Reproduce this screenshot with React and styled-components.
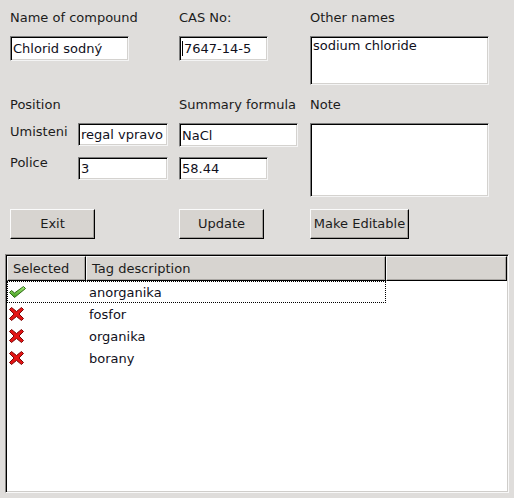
import React from 'react';
import styled, { createGlobalStyle } from 'styled-components';

const GlobalStyle = createGlobalStyle`
  body {
    margin: 0;
    background: #dfdddb;
    font-family: 'DejaVu Sans', 'Liberation Sans', sans-serif;
    font-size: 13px;
    color: #1c1c1c;
  }
`;

const TAGS = [
  { name: 'anorganika', selected: true },
  { name: 'fosfor', selected: false },
  { name: 'organika', selected: false },
  { name: 'borany', selected: false },
];

const CheckIcon = () => (
  <svg width='17' height='12' viewBox='0 0 17 12'>
    <defs>
      <linearGradient id='chk' x1='0' y1='0' x2='0' y2='1'>
        <stop offset='0' stopColor='#a6ec7a' />
        <stop offset='1' stopColor='#3f9a1c' />
      </linearGradient>
    </defs>
    <polygon
      points='0.5,6.5 2.5,4.5 5.5,7 14.5,0.5 16.5,2.5 5.5,11.5'
      fill='url(#chk)'
      stroke='#2d6a14'
      strokeWidth='1'
      strokeLinejoin='round'
    />
  </svg>
);

const CrossIcon = () => (
  <svg width='15' height='14' viewBox='0 0 15 14'>
    <polygon
      points='0.5,2.5 2.5,0.5 7.5,4.5 12.5,0.5 14.5,2.5 10,7 14.5,11.5 12.5,13.5 7.5,9.5 2.5,13.5 0.5,11.5 5,7'
      fill='#e41414'
      stroke='#7a0606'
      strokeWidth='1'
      strokeLinejoin='round'
    />
  </svg>
);

const App = () => (
  <>
    <GlobalStyle />
    <Window>
      <Form>
        <Label>Name of compound</Label>
        <Label>CAS No:</Label>
        <Label>Other names</Label>

        <Field width='119px' height='25px'>
          Chlorid sodný
        </Field>
        <Field width='89px' height='25px'>
          <Caret />
          7647-14-5
        </Field>
        <TextBox height='49px'>sodium chloride</TextBox>

        <Label>Position</Label>
        <Label>Summary formula</Label>
        <Label>Note</Label>

        <PositionGrid>
          <SideLabel shift='1px'>Umisteni</SideLabel>
          <Field width='90px' height='23px'>
            regal vpravo
          </Field>
          <SideLabel shift='-2px'>Police</SideLabel>
          <Field width='90px' height='23px'>
            3
          </Field>
        </PositionGrid>
        <Stack>
          <Field width='119px' height='24px'>
            NaCl
          </Field>
          <Field width='89px' height='23px'>
            58.44
          </Field>
        </Stack>
        <TextBox height='74px' />

        <Button width='85px'>Exit</Button>
        <Button width='85px'>Update</Button>
        <Button width='99px'>Make Editable</Button>
      </Form>

      <Table>
        <HeaderRow>
          <HeaderCell>Selected</HeaderCell>
          <HeaderCell>Tag description</HeaderCell>
          <HeaderCell />
        </HeaderRow>
        {TAGS.map((tag, i) => (
          <Row key={tag.name} focused={i === 0}>
            <IconCell>{tag.selected ? <CheckIcon /> : <CrossIcon />}</IconCell>
            <TextCell>{tag.name}</TextCell>
          </Row>
        ))}
      </Table>
    </Window>
  </>
);

const Window = styled('div')`
  width: 514px;
  height: 498px;
  overflow: hidden;
  background: #dfdddb;
`;

const Form = styled('div')`
  display: grid;
  grid-template-columns: 169px 131px 179px;
  grid-template-rows: 26px 61px 26px 86px 30px;
  align-items: start;
  padding: 10px 0 0 10px;
`;

const Label = styled('div')`
  line-height: 15px;
  white-space: nowrap;
`;

const SideLabel = styled(Label)`
  margin-top: ${({ shift }) => shift};
`;

const sunken = `
  box-sizing: border-box;
  background: #fff;
  border: 1px solid;
  border-color: #7c7c7c #f4f4f4 #f4f4f4 #7c7c7c;
  box-shadow: inset 1px 1px 0 #000, inset -1px -1px 0 #d4d2cf;
  color: #10101c;
  white-space: nowrap;
  overflow: hidden;
`;

const Field = styled('div')`
  ${sunken}
  display: flex;
  align-items: center;
  width: ${({ width }) => width};
  height: ${({ height }) => height};
  padding: 0 2px 0 2px;
  line-height: 15px;
`;

const Caret = styled('span')`
  display: inline-block;
  width: 0;
  height: 15px;
  border-left: 1px solid #000;
  margin-right: 1px;
`;

const TextBox = styled('div')`
  ${sunken}
  width: 179px;
  height: ${({ height }) => height};
  padding: 1px 2px;
  line-height: 15px;
`;

const PositionGrid = styled('div')`
  display: grid;
  grid-template-columns: 68px 90px;
  grid-template-rows: 23px 23px;
  row-gap: 11px;
  align-items: start;
`;

const Stack = styled('div')`
  display: flex;
  flex-direction: column;
  gap: 10px;
`;

const Button = styled('div')`
  box-sizing: border-box;
  display: flex;
  align-items: center;
  justify-content: center;
  width: ${({ width }) => width};
  height: 30px;
  padding-bottom: 2px;
  background: #d7d4d0;
  border: 1px solid;
  border-color: #fbfbfb #000 #000 #fbfbfb;
  box-shadow: inset -1px -1px 0 #a19e9a;
  white-space: nowrap;
`;

const Table = styled('div')`
  box-sizing: border-box;
  margin: 15px 0 0 5px;
  width: 504px;
  height: 239px;
  background: #fff;
  border: 1px solid;
  border-color: #8a8886 #f8f8f8 #f8f8f8 #8a8886;
  box-shadow: inset 1px 1px 0 #000, inset -1px -1px 0 #cfcdca;
  padding: 1px;
`;

const HeaderRow = styled('div')`
  display: grid;
  grid-template-columns: 79px 300px 121px;
  height: 25px;
`;

const HeaderCell = styled('div')`
  box-sizing: border-box;
  display: flex;
  align-items: center;
  padding-left: 5px;
  background: #d7d4d0;
  border: 1px solid;
  border-color: #f7f7f7 #000 #000 #f7f7f7;
  box-shadow: inset -1px -1px 0 #a9a6a2;
  white-space: nowrap;
`;

const Row = styled('div')`
  box-sizing: border-box;
  display: grid;
  grid-template-columns: 79px 300px;
  width: 379px;
  height: 22px;
  align-items: center;
  border: 1px dotted ${({ focused }) => (focused ? '#000' : 'transparent')};
`;

const IconCell = styled('div')`
  display: flex;
  align-items: center;
  padding-left: 1px;
  height: 20px;
`;

const TextCell = styled('div')`
  padding-left: 2px;
  line-height: 15px;
  color: #10101c;
`;

export default App;
